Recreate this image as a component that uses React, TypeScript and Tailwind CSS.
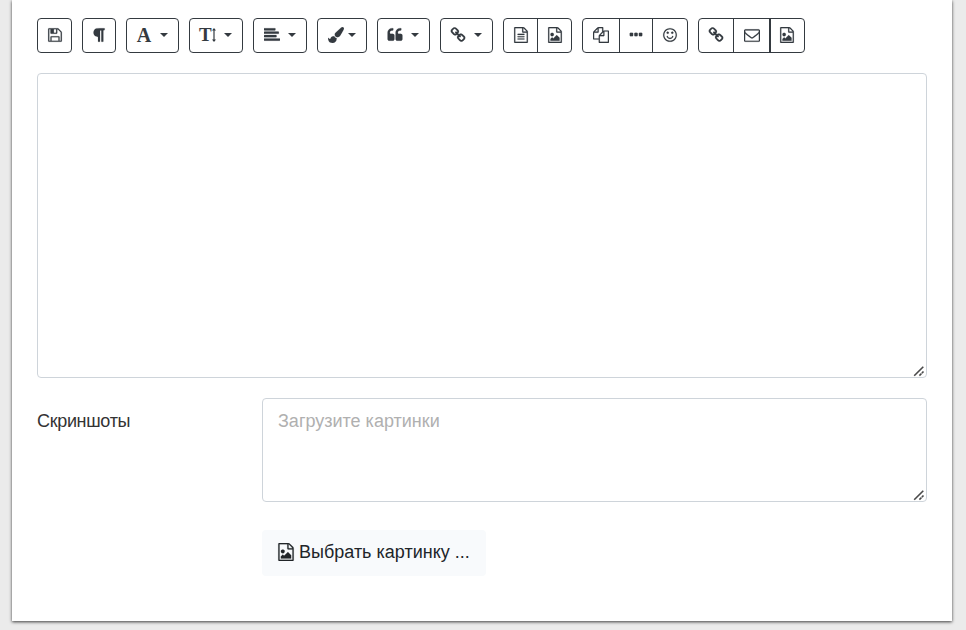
import type { ReactNode } from "react";

const FILE =
  "M1596 380q28 28 48 76t20 88v1152q0 40-28 68t-68 28h-1344q-40 0-68-28t-28-68v-1600q0-40 28-68t68-28h896q40 0 88 20t76 48zm-444-244v376h376q-10-29-22-41l-313-313q-12-12-41-22zm384 1528v-1024h-416q-40 0-68-28t-28-68v-416h-768v1536h1280z";

const DOT = "v192q0 40-28 68t-68 28h-192q-40 0-68-28t-28-68v-192q0-40 28-68t68-28h192q40 0 68 28t28 68z";

const icons = {
  save: "M512 1536h768v-384h-768v384zm896 0h128v-896q0-14-10-38.5t-20-34.5l-281-281q-10-10-34-20t-39-10v416q0 40-28 68t-68 28h-576q-40 0-68-28t-28-68v-416h-128v1280h128v-416q0-40 28-68t68-28h832q40 0 68 28t28 68v416zm-384-928v-320q0-13-9.5-22.5t-22.5-9.5h-192q-13 0-22.5 9.5t-9.5 22.5v320q0 13 9.5 22.5t22.5 9.5h192q13 0 22.5-9.5t9.5-22.5zm640 32v928q0 40-28 68t-68 28h-1344q-40 0-68-28t-28-68v-1344q0-40 28-68t68-28h928q40 0 88 20t76 48l280 280q28 28 48 76t20 88z",
  paragraph:
    "M1534 189v73q0 29-18.5 61t-42.5 32q-50 0-54 1-26 6-32 31-3 11-3 64v1152q0 25-18 43t-43 18h-108q-25 0-43-18t-18-43v-1218h-143v1218q0 25-17.5 43t-43.5 18h-108q-26 0-43.5-18t-17.5-43v-496q-147-12-245-59-126-58-192-179-64-117-64-259 0-166 88-286 88-118 209-159 111-37 417-37h479q25 0 43 18t18 43z",
  align:
    "M1792 1344v128q0 26-19 45t-45 19h-1664q-26 0-45-19t-19-45v-128q0-26 19-45t45-19h1664q26 0 45 19t19 45zm-384-384v128q0 26-19 45t-45 19h-1280q-26 0-45-19t-19-45v-128q0-26 19-45t45-19h1280q26 0 45 19t19 45zm256-384v128q0 26-19 45t-45 19h-1536q-26 0-45-19t-19-45v-128q0-26 19-45t45-19h1536q26 0 45 19t19 45zm-384-384v128q0 26-19 45t-45 19h-1152q-26 0-45-19t-19-45v-128q0-26 19-45t45-19h1152q26 0 45 19t19 45z",
  brush:
    "M1615 0q70 0 122.5 46.5t52.5 116.5q0 63-45 151-332 629-465 752-97 91-218 91-126 0-216.5-92.5t-90.5-219.5q0-128 92-212l638-579q59-54 130-54zm-909 1034q39 76 106.5 130t150.5 76l1 71q4 213-129.5 347t-348.5 134q-123 0-218-46.5t-152.5-127.5-86.5-183-29-220q7 5 41 30t62 44.5 59 36.5 46 17q41 0 55-37 25-66 57.5-112.5t69.5-76 88-47.5 103-25.5 125-10.5z",
  quote:
    "M832 960v384q0 80-56 136t-136 56h-384q-80 0-136-56t-56-136v-704q0-104 40.5-198.5t109.5-163.5 163.5-109.5 198.5-40.5h64q26 0 45 19t19 45v128q0 26-19 45t-45 19h-64q-106 0-181 75t-75 181v32q0 40 28 68t68 28h224q80 0 136 56t56 136zm896 0v384q0 80-56 136t-136 56h-384q-80 0-136-56t-56-136v-704q0-104 40.5-198.5t109.5-163.5 163.5-109.5 198.5-40.5h64q26 0 45 19t19 45v128q0 26-19 45t-45 19h-64q-106 0-181 75t-75 181v32q0 40 28 68t68 28h224q80 0 136 56t56 136z",
  link: "M1520 1216q0-40-28-68l-208-208q-28-28-68-28-42 0-72 32 3 3 19 18.5t21.5 21.5 15 19 13 25.5 3.5 27.5q0 40-28 68t-68 28q-15 0-27.5-3.5t-25.5-13-19-15-21.5-21.5-18.5-19q-33 31-33 73 0 40 28 68l206 207q27 27 68 27 40 0 68-26l147-146q28-28 28-67zm-703-705q0-40-28-68l-206-207q-28-28-68-28-39 0-68 27l-147 146q-28 28-28 67 0 40 28 68l208 208q27 27 68 27 42 0 72-31-3-3-19-18.5t-21.5-21.5-15-19-13-25.5-3.5-27.5q0-40 28-68t68-28q15 0 27.5 3.5t25.5 13 19 15 21.5 21.5 18.5 19q33-31 33-73zm895 705q0 120-85 203l-147 146q-83 83-203 83-121 0-204-85l-206-207q-83-83-83-203 0-123 88-209l-88-88q-86 88-208 88-120 0-204-84l-208-208q-84-84-84-204t85-203l147-146q83-83 203-83 121 0 204 85l206 207q83 83 83 203 0 123-88 209l88 88q86-88 208-88 120 0 204 84l208 208q84 84 84 204z",
  fileText:
    FILE +
    "M512 800q0-14 9-23t23-9h704q14 0 23 9t9 23v64q0 14-9 23t-23 9h-704q-14 0-23-9t-9-23v-64zm736 224q14 0 23 9t9 23v64q0 14-9 23t-23 9h-704q-14 0-23-9t-9-23v-64q0-14 9-23t23-9h704zm0 256q14 0 23 9t9 23v64q0 14-9 23t-23 9h-704q-14 0-23-9t-9-23v-64q0-14 9-23t23-9h704z",
  fileImage:
    FILE +
    "M1408 1216v320h-1024v-192l192-192 128 128 384-384zm-832-192q-80 0-136-56t-56-136 56-136 136-56 136 56 56 136-56 136-136 56z",
  copy: "M1696 384q40 0 68 28t28 68v1216q0 40-28 68t-68 28h-960q-40 0-68-28t-28-68v-288h-544q-40 0-68-28t-28-68v-672q0-40 20-88t48-76l408-408q28-28 76-48t88-20h416q40 0 68 28t28 68v328q68-40 128-40h416zm-544 213l-299 299h299v-299zm-640-384l-299 299h299v-299zm196 647l316-316v-416h-384v416q0 40-28 68t-68 28h-416v640h512v-256q0-40 20-88t48-76zm956 804v-1152h-384v416q0 40-28 68t-68 28h-416v640h896z",
  dots: "M576 736" + DOT + "M1088 736" + DOT + "M1600 736" + DOT,
  smile:
    "M1262 1075q-37 121-138 195t-228 74-228-74-138-195q-8-25 4-48.5t38-31.5q25-8 48.5 4t31.5 38q25 80 92.5 129.5t151.5 49.5 151.5-49.5 92.5-129.5q8-26 32-38t49-4 37 31.5 4 48.5zm-494-435q0 53-37.5 90.5t-90.5 37.5-90.5-37.5-37.5-90.5 37.5-90.5 90.5-37.5 90.5 37.5 37.5 90.5zm512 0q0 53-37.5 90.5t-90.5 37.5-90.5-37.5-37.5-90.5 37.5-90.5 90.5-37.5 90.5 37.5 37.5 90.5zm256 256q0-130-51-248.5t-136.5-204-204-136.5-248.5-51-248.5 51-204 136.5-136.5 204-51 248.5 51 248.5 136.5 204 204 136.5 248.5 51 248.5-51 204-136.5 136.5-204 51-248.5zm128 0q0 209-103 385.5t-279.5 279.5-385.5 103-385.5-103-279.5-279.5-103-385.5 103-385.5 279.5-279.5 385.5-103 385.5 103 279.5 279.5 103 385.5z",
  mail: "M1664 1504v-768q-32 36-69 66-268 206-426 338-51 43-83 67t-86.5 48.5-102.5 24.5h-2q-48 0-102.5-24.5t-86.5-48.5-83-67q-158-132-426-338-37-30-69-66v768q0 13 9.5 22.5t22.5 9.5h1472q13 0 22.5-9.5t9.5-22.5zm0-1051v-24.5l-.5-13-3-12.5-5.5-9-9-7.5-14-2.5h-1472q-13 0-22.5 9.5t-9.5 22.5q0 168 147 284 193 152 401 317 6 5 35 29.5t46 37.5 44.5 31.5 50.5 27.5 43 9h2q20 0 43-9t50.5-27.5 44.5-31.5 46-37.5 35-29.5q208-165 401-317 54-43 100.5-115.5t46.5-131.5zm128-37v1088q0 66-47 113t-113 47h-1472q-66 0-113-47t-47-113v-1088q0-66 47-113t113-47h1472q66 0 113 47t47 113z",
};

function Icon({ name, className = "size-4" }: { name: keyof typeof icons; className?: string }) {
  return (
    <svg viewBox="0 0 1792 1792" fill="currentColor" stroke="currentColor" strokeWidth="16" className={`block shrink-0 ${className}`}>
      <path d={icons[name]} />
    </svg>
  );
}

function Group({ children }: { children: ReactNode }) {
  return (
    <div className="flex h-[35px] divide-x divide-[#343a40] overflow-hidden rounded border border-[#343a40]">
      {children}
    </div>
  );
}

function Tool({ width, children }: { width: string; children: ReactNode }) {
  return (
    <button type="button" className={`flex h-full items-center justify-center pb-px ${width}`}>
      {children}
    </button>
  );
}

function Dropdown({ width, pad = "pl-[9px]", children }: { width: string; pad?: string; children: ReactNode }) {
  return (
    <Group>
      <button type="button" className={`flex h-full items-center justify-between pr-[10px] pb-px ${pad} ${width}`}>
        {children}
        <span className="border-x-4 border-t-4 border-x-transparent border-t-[#343a40]" />
      </button>
    </Group>
  );
}

function Grip() {
  return (
    <svg viewBox="0 0 12 12" className="pointer-events-none absolute right-[2px] bottom-[1px] size-3" stroke="#4a4a4a" strokeWidth="1.6">
      <path d="M1.2 10.8 10.3 1.7M6.4 10.6l2.1-2.1M8.9 8.1l1.6-1.6" fill="none" />
    </svg>
  );
}

export default function App() {
  return (
    <div className="h-[630px] overflow-hidden bg-[#ebebeb] px-3 font-['Liberation_Sans',Arial,sans-serif] text-lg text-[#212529]">
      <main className="mr-[2px] h-[621px] bg-white pt-[18px] pr-[25px] pl-[25px] shadow-[0_1px_3px_rgba(0,0,0,0.75)]">
        <div className="flex gap-[10px] text-[#343a40]">
          <Group>
            <Tool width="w-[33px]"><Icon name="save" /></Tool>
          </Group>
          <Group>
            <Tool width="w-8"><Icon name="paragraph" /></Tool>
          </Group>
          <Dropdown width="w-[51px]">
            <span className="w-4 text-center font-['Liberation_Serif',serif] text-[20px] leading-4 font-bold">A</span>
          </Dropdown>
          <Dropdown width="w-[52px]">
            <span className="flex w-[18px] items-center">
              <span className="font-['Liberation_Serif',serif] text-[19px] leading-4 font-bold">T</span>
              <svg viewBox="0 0 4 14" className="h-[14px] w-1 shrink-0" fill="currentColor">
                <path d="M2 0 4 2.5H2.6v9H4L2 14 0 11.5h1.4v-9H0z" />
              </svg>
            </span>
          </Dropdown>
          <Dropdown width="w-[52px]" pad="pl-[10px]"><Icon name="align" /></Dropdown>
          <Dropdown width="w-12" pad="pl-[10px]"><Icon name="brush" /></Dropdown>
          <Dropdown width="w-[51px]"><Icon name="quote" /></Dropdown>
          <Dropdown width="w-[51px]"><Icon name="link" /></Dropdown>
          <Group>
            <Tool width="w-[34px]"><Icon name="fileText" /></Tool>
            <Tool width="w-[33px]"><Icon name="fileImage" /></Tool>
          </Group>
          <Group>
            <Tool width="w-[37px]"><Icon name="copy" /></Tool>
            <Tool width="w-[33px]"><Icon name="dots" /></Tool>
            <Tool width="w-[34px]"><Icon name="smile" /></Tool>
          </Group>
          <Group>
            <Tool width="w-[35px]"><Icon name="link" /></Tool>
            <Tool width="w-[37px] border-r-2!"><Icon name="mail" /></Tool>
            <Tool width="w-[33px] pr-px"><Icon name="fileImage" /></Tool>
          </Group>
        </div>

        <div className="relative mt-5 h-[305px]">
          <textarea className="block size-full resize-none rounded border border-[#ced4da] px-[15px] py-2 outline-none" />
          <Grip />
        </div>

        <div className="mt-5 flex">
          <label className="w-[225px] pt-[10px] leading-[27px] tracking-[-0.33px] text-[#333]">Скриншоты</label>
          <div className="flex-1">
            <div className="relative h-[104px]">
              <textarea
                placeholder="Загрузите картинки"
                className="block size-full resize-none rounded border border-[#ced4da] px-[15px] pt-[9px] pb-2 leading-[27px] outline-none placeholder:text-[#b0b0b0]"
              />
              <Grip />
            </div>
            <button type="button" className="mt-7 flex h-[46px] w-[224px] items-center rounded bg-[#f8fafc] pl-[15px] pb-0.5 leading-[27px] whitespace-nowrap">
              <Icon name="fileImage" className="mr-1 size-[18px]" />
              <span>Выбрать картинку ...</span>
            </button>
          </div>
        </div>
      </main>
    </div>
  );
}
